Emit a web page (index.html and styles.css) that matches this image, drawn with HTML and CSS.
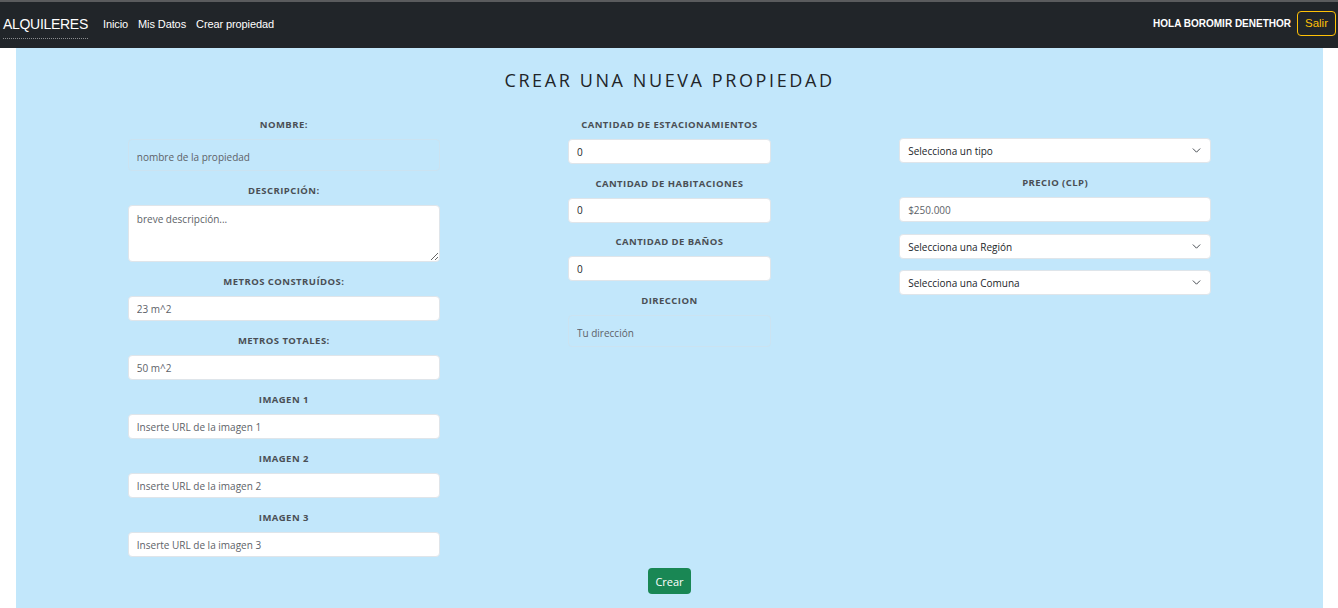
FILE: index.html
```html
<!DOCTYPE html>
<html lang="es">
<head>
<meta charset="utf-8">
<title>Crear propiedad</title>
<link rel="stylesheet" href="styles.css">
</head>
<body>
<nav class="navbar">
  <a class="brand" href="#">ALQUILERES</a>
  <ul class="nav-links">
    <li><a href="#">Inicio</a></li>
    <li><a href="#">Mis Datos</a></li>
    <li><a href="#">Crear propiedad</a></li>
  </ul>
  <div class="nav-right">
    <span class="greeting">HOLA BOROMIR DENETHOR</span>
    <button class="btn-salir" type="button">Salir</button>
  </div>
</nav>

<main class="panel">
  <h1 class="title">CREAR UNA NUEVA PROPIEDAD</h1>
  <form class="form-grid">
    <div class="col col-wide">
      <div class="field">
        <label>NOMBRE:</label>
        <input class="control control-plain" type="text" placeholder="nombre de la propiedad">
      </div>
      <div class="field">
        <label>DESCRIPCIÓN:</label>
        <textarea class="control control-area" placeholder="breve descripción..."></textarea>
      </div>
      <div class="field">
        <label>METROS CONSTRUÍDOS:</label>
        <input class="control" type="text" placeholder="23 m^2">
      </div>
      <div class="field">
        <label>METROS TOTALES:</label>
        <input class="control" type="text" placeholder="50 m^2">
      </div>
      <div class="field">
        <label>IMAGEN 1</label>
        <input class="control" type="text" placeholder="Inserte URL de la imagen 1">
      </div>
      <div class="field">
        <label>IMAGEN 2</label>
        <input class="control" type="text" placeholder="Inserte URL de la imagen 2">
      </div>
      <div class="field field-last">
        <label>IMAGEN 3</label>
        <input class="control" type="text" placeholder="Inserte URL de la imagen 3">
      </div>
    </div>

    <div class="col col-narrow">
      <div class="field field-mid">
        <label>CANTIDAD DE ESTACIONAMIENTOS</label>
        <input class="control" type="text" value="0">
      </div>
      <div class="field field-mid">
        <label>CANTIDAD DE HABITACIONES</label>
        <input class="control" type="text" value="0">
      </div>
      <div class="field field-mid">
        <label>CANTIDAD DE BAÑOS</label>
        <input class="control" type="text" value="0">
      </div>
      <div class="field">
        <label>DIRECCION</label>
        <input class="control control-plain" type="text" placeholder="Tu dirección">
      </div>
    </div>

    <div class="col col-wide col-right">
      <select class="control select sel-tipo">
        <option>Selecciona un tipo</option>
      </select>
      <div class="field field-price">
        <label>PRECIO (CLP)</label>
        <input class="control" type="text" placeholder="$250.000">
      </div>
      <select class="control select sel-region">
        <option>Selecciona una Región</option>
      </select>
      <select class="control select">
        <option>Selecciona una Comuna</option>
      </select>
    </div>
  </form>
  <div class="actions">
    <button class="btn-crear" type="button">Crear</button>
  </div>
</main>
</body>
</html>
```

FILE: styles.css
```css
* { box-sizing: border-box; }

html, body {
  margin: 0;
  padding: 0;
  background: #ffffff;
}

body {
  font-family: "Open Sans", "Noto Sans", sans-serif;
  color: #212529;
}

/* ---------- NAVBAR ---------- */
.navbar {
  display: flex;
  align-items: center;
  height: 48px;
  background: #212529;
  border-top: 2px solid #5a5b5d;
  padding: 0 2px 4px 3px;
  font-family: "Liberation Sans", Arial, sans-serif;
}

.brand {
  color: #ffffff;
  text-decoration: none;
  font-size: 14px;
  line-height: 16px;
  padding-bottom: 6px;
  margin-top: 9px;
  border-bottom: 1px dotted #8a8c8f;
  letter-spacing: -0.3px;
}

.nav-links {
  display: flex;
  list-style: none;
  margin: 0 0 0 15px;
  padding: 0;
  gap: 10px;
}

.nav-links a {
  color: #ffffff;
  text-decoration: none;
  font-size: 11px;
  letter-spacing: -0.1px;
}

.nav-right {
  margin-left: auto;
  display: flex;
  align-items: center;
}

.greeting {
  color: #ffffff;
  font-size: 10px;
  font-weight: bold;
}

.btn-salir {
  margin-left: 6px;
  width: 39px;
  height: 25px;
  background: transparent;
  border: 1px solid #ffc107;
  border-radius: 4px;
  color: #ffc107;
  font-family: "Liberation Sans", Arial, sans-serif;
  font-size: 11.5px;
  padding: 0;
}

/* ---------- PANEL ---------- */
.panel {
  background: #c2e7fb;
  margin: 0 15px 0 16px;
  min-height: 560px;
  padding-top: 20px;
}

.title {
  margin: 0;
  text-align: center;
  font-size: 18px;
  line-height: 24px;
  font-weight: 500;
  letter-spacing: 2.6px;
  color: #212529;
}

.form-grid {
  width: 1157px;
  margin: 26px auto 0;
  display: grid;
  grid-template-columns: repeat(3, 1fr);
}

.col {
  display: flex;
  flex-direction: column;
  align-items: center;
}

.col.col-wide > * { width: 312px; }
.col.col-narrow > * { width: 203px; }

.col-right { padding-top: 20px; }

.field {
  display: flex;
  flex-direction: column;
  margin-bottom: 13px;
}

.field label {
  display: block;
  text-align: center;
  font-size: 9.5px;
  font-weight: 700;
  letter-spacing: 0.45px;
  line-height: 14px;
  color: #4a4f55;
  margin-bottom: 7px;
}

.field-mid { margin-bottom: 12.5px; }
.field-last { margin-bottom: 11px; }

.control {
  display: block;
  width: 100%;
  height: 25px;
  background: #ffffff;
  border: 1px solid #dfe5ea;
  border-radius: 4px;
  padding: 0 8px;
  font-family: "Open Sans", "Noto Sans", sans-serif;
  font-size: 10px;
  color: #212529;
  outline: none;
}

.control::placeholder { color: #5d6268; opacity: 1; }

.control-plain {
  height: 32px;
  padding-top: 4px;
  background: transparent;
  border-color: #cbe3f1;
}

.control-area {
  height: 57px;
  padding: 6px 8px;
  resize: vertical;
}

.select {
  appearance: none;
  -webkit-appearance: none;
  padding-right: 26px;
  background-image: url("data:image/svg+xml,%3csvg xmlns='http://www.w3.org/2000/svg' viewBox='0 0 16 16'%3e%3cpath fill='none' stroke='%23343a40' stroke-linecap='round' stroke-linejoin='round' stroke-width='1.6' d='m2 5 6 6 6-6'/%3e%3c/svg%3e");
  background-repeat: no-repeat;
  background-position: right 9px center;
  background-size: 9px 9px;
}

.sel-tipo { margin-bottom: 13px; }
.field-price { margin-bottom: 12px; }
.sel-region { margin-bottom: 11px; }

/* ---------- ACTIONS ---------- */
.actions {
  display: flex;
  justify-content: center;
}

.btn-crear {
  width: 43px;
  height: 26px;
  background: #198754;
  border: none;
  border-radius: 4px;
  color: #ffffff;
  font-family: "Open Sans", "Noto Sans", sans-serif;
  font-size: 11px;
  padding: 0;
}
```
